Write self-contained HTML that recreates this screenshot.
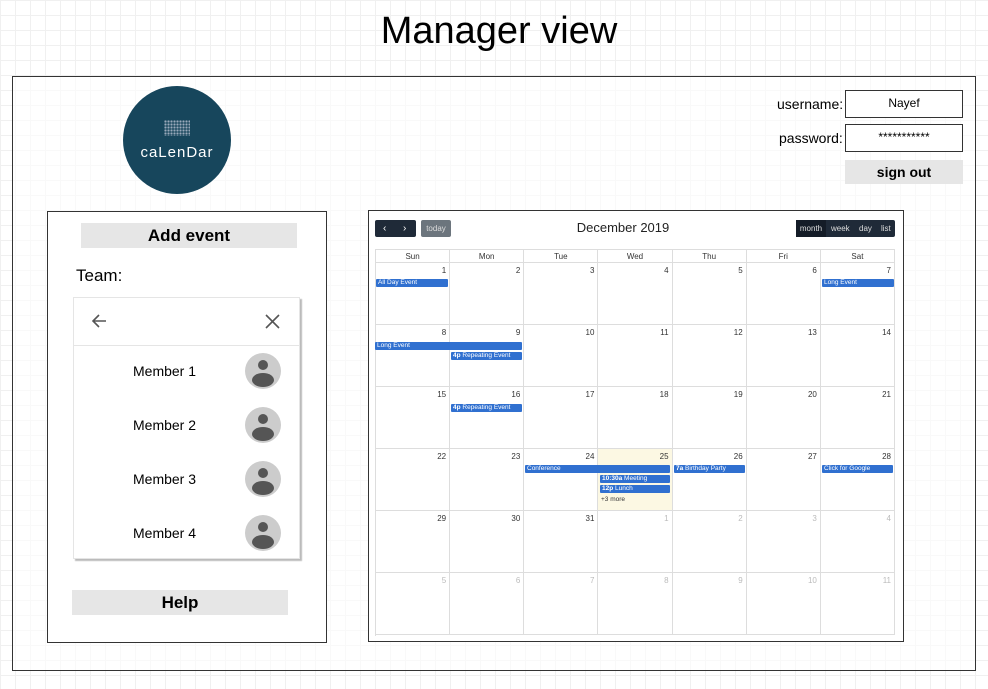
<!DOCTYPE html>
<html><head><meta charset="utf-8"><style>
*{margin:0;padding:0;box-sizing:border-box}
body{width:988px;height:689px;position:relative;overflow:hidden;font-family:"Liberation Sans",sans-serif;
background-color:#fff;background-image:linear-gradient(#f0f0f0 1px,transparent 1px),linear-gradient(90deg,#f0f0f0 1px,transparent 1px);background-size:15px 15px}
.a{position:absolute}
.btn{background:#e6e6e6;font-weight:bold;text-align:center;color:#000}
.cal{position:absolute;left:375px;top:249px;width:520px;height:387px;display:grid;grid-template-columns:repeat(7,1fr);grid-template-rows:13px repeat(6,62px);border-left:1px solid #ddd;border-top:1px solid #ddd}
.cal div{border-right:1px solid #ddd;border-bottom:1px solid #ddd;font-size:8px;color:#333;text-align:right;padding:3px 3px 0 0}
.cal .h{text-align:center;padding:2px 0 0}
.cal .o{color:#bbb}
.cal .t{background:#fcf8e3}
.ev{position:absolute;height:8px;background:#3070d0;color:#fff;font-size:6.5px;line-height:8px;padding-left:2px;border-radius:1px;white-space:nowrap;overflow:hidden}
.ev b{font-weight:bold}
.mem{position:absolute;left:133px;font-size:14px;color:#000}
.av{position:absolute;left:245px;width:36px;height:36px;border-radius:50%;background:#ccc;overflow:hidden}
.av:before{content:"";position:absolute;left:13px;top:7px;width:10px;height:10px;border-radius:50%;background:#555}
.av:after{content:"";position:absolute;left:7px;top:20px;width:22px;height:14px;border-radius:50%;background:#555}
</style></head><body>
<div class="a" style="left:0;top:10px;width:998px;text-align:center;font-size:38px;color:#000">Manager view</div>
<div class="a" style="left:12px;top:76px;width:964px;height:595px;border:1.5px solid #333;background:rgba(255,255,255,0.6)"></div>

<div class="a" style="left:123px;top:86px;width:108px;height:108px;border-radius:50%;background:#17465c"></div>
<div class="a" style="left:164px;top:120px;width:26px;height:16px;background-image:radial-gradient(circle,#9ab 1px,transparent 1.3px);background-size:3px 3px"></div>
<div class="a" style="left:123px;top:144px;width:108px;text-align:center;color:#fff;font-size:15px;letter-spacing:1px">caLenDar</div>

<div class="a" style="left:777px;top:96px;font-size:14px">username:</div>
<div class="a" style="left:845px;top:90px;width:118px;height:28px;border:1.5px solid #333;background:#fff;text-align:center;font-size:12px;line-height:25px">Nayef</div>
<div class="a" style="left:779px;top:130px;font-size:14px">password:</div>
<div class="a" style="left:845px;top:124px;width:118px;height:28px;border:1.5px solid #333;background:#fff;text-align:center;font-size:12px;line-height:25px">***********</div>
<div class="a btn" style="left:845px;top:160px;width:118px;height:24px;font-size:14px;line-height:24px">sign out</div>

<div class="a" style="left:47px;top:211px;width:280px;height:432px;border:1.5px solid #333;background:#fff"></div>
<div class="a btn" style="left:81px;top:223px;width:216px;height:25px;font-size:17px;line-height:25px">Add event</div>
<div class="a" style="left:76px;top:266px;font-size:17px">Team:</div>
<div class="a" style="left:73px;top:297px;width:227px;height:262px;border:1px solid #e5e5e5;box-shadow:2px 2px 1px #bbb;background:#fff"></div>
<div class="a" style="left:73px;top:345px;width:226px;height:1px;background:#e5e5e5"></div>
<svg class="a" style="left:90px;top:312px" width="18" height="18" viewBox="0 0 18 18"><path d="M16 9H3M9 3L3 9l6 6" stroke="#555" stroke-width="1.6" fill="none"/></svg>
<svg class="a" style="left:264px;top:313px" width="17" height="17" viewBox="0 0 17 17"><path d="M2 2l13 13M15 2L2 15" stroke="#555" stroke-width="1.6"/></svg>
<div class="mem" style="top:363px">Member 1</div><div class="av" style="top:353px"></div>
<div class="mem" style="top:417px">Member 2</div><div class="av" style="top:407px"></div>
<div class="mem" style="top:471px">Member 3</div><div class="av" style="top:461px"></div>
<div class="mem" style="top:525px">Member 4</div><div class="av" style="top:515px"></div>
<div class="a btn" style="left:72px;top:590px;width:216px;height:25px;font-size:17px;line-height:25px">Help</div>

<div class="a" style="left:368px;top:210px;width:536px;height:432px;border:1.5px solid #333;background:#fff"></div>
<div class="a" style="left:375px;top:220px;width:41px;height:17px;background:#1f2a38;border-radius:2px;color:#fff;font-size:10px;line-height:17px"><span style="position:absolute;left:8px">‹</span><span style="position:absolute;left:28px">›</span></div>
<div class="a" style="left:421px;top:220px;width:30px;height:17px;background:#6c757d;border-radius:2px;color:#ddd;font-size:8px;line-height:17px;text-align:center">today</div>
<div class="a" style="left:560px;top:220px;width:126px;text-align:center;font-size:13px;color:#222">December 2019</div>
<div class="a" style="left:796px;top:220px;width:99px;height:17px;background:#1f2a38;border-radius:2px;color:#ddd;font-size:8px;line-height:17px">
<span style="position:absolute;left:0;width:30px;height:17px;background:#141c27;text-align:center">month</span><span style="position:absolute;left:35px">week</span><span style="position:absolute;left:63px">day</span><span style="position:absolute;left:85px">list</span></div>

<div class="cal">
<div class="h">Sun</div><div class="h">Mon</div><div class="h">Tue</div><div class="h">Wed</div><div class="h">Thu</div><div class="h">Fri</div><div class="h">Sat</div>
<div>1</div><div>2</div><div>3</div><div>4</div><div>5</div><div>6</div><div>7</div>
<div>8</div><div>9</div><div>10</div><div>11</div><div>12</div><div>13</div><div>14</div>
<div>15</div><div>16</div><div>17</div><div>18</div><div>19</div><div>20</div><div>21</div>
<div>22</div><div>23</div><div>24</div><div class="t">25</div><div>26</div><div>27</div><div>28</div>
<div>29</div><div>30</div><div>31</div><div class="o">1</div><div class="o">2</div><div class="o">3</div><div class="o">4</div>
<div class="o">5</div><div class="o">6</div><div class="o">7</div><div class="o">8</div><div class="o">9</div><div class="o">10</div><div class="o">11</div>
</div>
<div class="ev" style="left:376px;top:279px;width:72px">All Day Event</div>
<div class="ev" style="left:822px;top:279px;width:72px">Long Event</div>
<div class="ev" style="left:375px;top:342px;width:147px">Long Event</div>
<div class="ev" style="left:451px;top:352px;width:71px"><b>4p</b> Repeating Event</div>
<div class="ev" style="left:451px;top:404px;width:71px"><b>4p</b> Repeating Event</div>
<div class="ev" style="left:525px;top:465px;width:145px">Conference</div>
<div class="ev" style="left:600px;top:475px;width:70px"><b>10:30a</b> Meeting</div>
<div class="ev" style="left:600px;top:485px;width:70px"><b>12p</b> Lunch</div>
<div class="a" style="left:601px;top:496px;font-size:6.5px;color:#333">+3 more</div>
<div class="ev" style="left:674px;top:465px;width:71px"><b>7a</b> Birthday Party</div>
<div class="ev" style="left:822px;top:465px;width:71px">Click for Google</div>
</body></html>
